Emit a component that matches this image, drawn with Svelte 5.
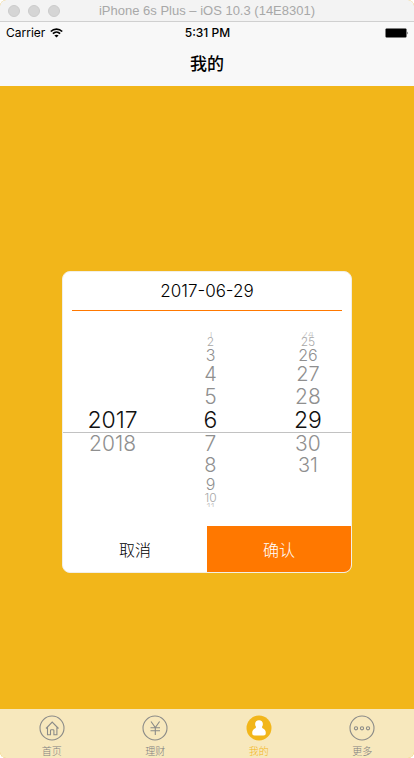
<script>
  const years = [
    { text: '2017', level: 'on' },
    { text: '2018', level: 'd1' }
  ];
  const months = [
    { text: '1', level: 'u5' },
    { text: '2', level: 'u4' },
    { text: '3', level: 'u3' },
    { text: '4', level: 'u2' },
    { text: '5', level: 'u1' },
    { text: '6', level: 'on' },
    { text: '7', level: 'd1' },
    { text: '8', level: 'd2' },
    { text: '9', level: 'd3' },
    { text: '10', level: 'd4' },
    { text: '11', level: 'd5' }
  ];
  const days = [
    { text: '24', level: 'u5' },
    { text: '25', level: 'u4' },
    { text: '26', level: 'u3' },
    { text: '27', level: 'u2' },
    { text: '28', level: 'u1' },
    { text: '29', level: 'on' },
    { text: '30', level: 'd1' },
    { text: '31', level: 'd2' }
  ];
  const wheels = [
    { name: '年', kind: 'year', rows: years },
    { name: '月', kind: 'month', rows: months },
    { name: '日', kind: 'day', rows: days }
  ];
  const tabs = [
    { label: '首页', icon: 'home' },
    { label: '理财', icon: 'money' },
    { label: '我的', icon: 'user' },
    { label: '更多', icon: 'more' }
  ];
</script>

<div class="window">
  <div class="titlebar">
    <div class="lights"><span></span><span></span><span></span></div>
    <div class="device">iPhone 6s Plus – iOS 10.3 (14E8301)</div>
  </div>

  <header>
    <div class="status">
      <div class="carrier">
        Carrier
        <svg width="13" height="10" viewBox="0 0 13 10" fill="none" stroke="#000" stroke-width="1.7">
          <path d="M.8 3.5C4 .2 9 .2 12.2 3.5M2.9 5.7c2-2 5.2-2 7.2 0" />
          <path d="M6.5 9.6 4.4 7.5c1.200-1 3-1 4.200 0z" fill="#000" stroke="none" />
        </svg>
      </div>
      <div class="time">5:31 PM</div>
      <svg class="battery" width="24" height="10" viewBox="0 0 24 10">
        <rect x=".5" y=".5" width="21" height="9" rx="1" />
        <path d="M22.500 3.500q1.200 1.500 0 3z" />
      </svg>
    </div>
    <h1>我的</h1>
  </header>

  <main>
    <div class="card" role="dialog" aria-label="2017-06-29">
      <div class="date">2017-06-29</div>
      <div class="wheels">
        {#each wheels as wheel}
          <div class="wheel {wheel.kind}" role="group" aria-label={wheel.name}>
            {#each wheel.rows as row}
              <button type="button" class="row {row.level}">{row.text}</button>
            {/each}
          </div>
        {/each}
      </div>
      <div class="actions">
        <button type="button" class="cancel">取消</button>
        <button type="button" class="confirm">确认</button>
      </div>
    </div>
  </main>

  <nav>
    {#each tabs as tab}
      <a href="#{tab.icon}" class:active={tab.icon === 'user'}>
        <svg width="26" height="26" viewBox="0 0 26 26" fill="none" stroke="#8b8b88" stroke-width="1.1">
          {#if tab.icon === 'user'}
            <circle cx="13" cy="13" r="12.500" fill="#f2b61a" stroke="none" />
            <path d="M13 5.200c-2.400 0-3.900 1.700-3.900 3.800 0 1.200.4 2.200 1 3-.2.900-.8 1.300-1.600 1.800-1.500.9-2.300 2.200-2.300 4.200 0 1.700.8 2.500 2.300 2.500h9c1.500 0 2.300-.8 2.300-2.500 0-2-.8-3.300-2.300-4.200-.8-.5-1.400-.9-1.600-1.800.6-.8 1-1.800 1-3 0-2.100-1.500-3.800-3.900-3.800z" fill="#fff" stroke="none" />
          {:else}
            <circle cx="13" cy="13" r="12" />
          {/if}
          {#if tab.icon === 'home'}
            <path d="M7 13.500 13.200 7l6.300 6.500M8.500 12.500v7.200h3v-4.200q0-.8.8-.8h1.800q.8 0 .8.800v4.200h3v-7.200" />
          {:else if tab.icon === 'money'}
            <path d="M9 6.500l4.300 6 4.300-6M13.300 12.500V20M8.500 12.700h9.500M8.500 15.700h9.500" />
          {:else if tab.icon === 'more'}
            <circle cx="7" cy="13.300" r="1.600" />
            <circle cx="13" cy="13.300" r="1.600" />
            <circle cx="19" cy="13.300" r="1.600" />
          {/if}
        </svg>
        <span>{tab.label}</span>
      </a>
    {/each}
  </nav>
</div>

<style>
  :global(body) {
    margin: 0;
    background: #fff;
  }
  .window {
    position: relative;
    display: flex;
    flex-direction: column;
    min-height: 100vh;
    overflow: hidden;
    border-radius: 6px;
    background: #f2b61a;
    font-family: Inter, 'Noto Sans CJK SC', sans-serif;
    color: #000;
  }
  button {
    margin: 0;
    padding: 0;
    border: 0;
    background: none;
    font-family: inherit;
    cursor: pointer;
  }
  .titlebar {
    display: grid;
    grid-template-columns: 1fr auto 1fr;
    align-items: center;
    height: 21px;
    border-bottom: 1px solid #d0d0d0;
    background: #f3f3f3;
  }
  .lights {
    display: flex;
    gap: 8px;
    padding-left: 8px;
  }
  .lights span {
    box-sizing: border-box;
    width: 12px;
    height: 12px;
    border: 1px solid #cbcbcb;
    border-radius: 50%;
    background: #d5d5d5;
  }
  .device {
    font-family: 'Liberation Sans', sans-serif;
    font-size: 13px;
    color: #a8a8a8;
  }
  header {
    background: #f8f8f8;
  }
  .status {
    display: grid;
    grid-template-columns: 1fr auto 1fr;
    align-items: center;
    height: 21px;
    padding: 0 5px 0 6px;
    font-size: 12px;
  }
  .carrier {
    display: flex;
    align-items: center;
    gap: 5px;
  }
  .time {
    font-weight: 500;
  }
  .battery {
    justify-self: end;
  }
  h1 {
    margin: 0;
    height: 43px;
    line-height: 43px;
    font-size: 17px;
    font-weight: 500;
    text-align: center;
  }
  main {
    flex: 1;
    display: grid;
    place-items: center;
  }
  .card {
    box-sizing: border-box;
    width: 70%;
    border: 1px solid #f2efe6;
    border-radius: 8px;
    overflow: hidden;
    background: #fff;
  }
  .date {
    margin: 0 9px;
    height: 38px;
    line-height: 38px;
    border-bottom: 1px solid #ff7800;
    font-size: 17px;
    font-weight: 300;
    text-align: center;
  }
  .wheels {
    display: grid;
    grid-template-columns: 99fr 97fr 92fr;
    height: 175px;
    margin: 21px 0 19px;
    overflow: hidden;
  }
  .wheel {
    display: flex;
    flex-direction: column;
  }
  .year {
    padding-top: 76px;
  }
  .row {
    flex: none;
    font-weight: 300;
    color: #8f8f8f;
    text-align: center;
  }
  .day .row {
    padding-left: 6px;
  }
  .on {
    height: 25px;
    line-height: 24px;
    border-bottom: 1px solid #c2c2c2;
    font-size: 23px;
    color: #111;
  }
  .u1 {
    height: 23px;
    font-size: 21px;
    line-height: 23px;
  }
  .u2 {
    height: 22px;
    font-size: 20px;
    line-height: 22px;
  }
  .u3 {
    height: 16px;
    font-size: 16px;
    line-height: 16px;
  }
  .u4 {
    height: 10px;
    font-size: 12px;
    line-height: 10px;
    color: #a8a8a8;
  }
  .u5 {
    height: 5px;
    font-size: 10px;
    line-height: 5px;
    color: #c4c4c4;
  }
  .d1 {
    height: 22px;
    font-size: 21px;
    line-height: 22px;
  }
  .d2 {
    height: 21px;
    font-size: 20px;
    line-height: 21px;
  }
  .d3 {
    height: 16px;
    font-size: 16px;
    line-height: 16px;
  }
  .d4 {
    height: 11px;
    font-size: 12px;
    line-height: 11px;
    color: #a8a8a8;
  }
  .d5 {
    height: 5px;
    font-size: 10px;
    line-height: 8px;
    color: #c4c4c4;
  }
  .actions {
    display: grid;
    grid-template-columns: 1fr 1fr;
    height: 46px;
  }
  .actions button {
    font-size: 16px;
    font-weight: 300;
    color: #000;
  }
  .actions .confirm {
    background: #ff7800;
    color: #fff;
  }
  nav {
    position: absolute;
    left: 0;
    right: 0;
    bottom: 0;
    display: grid;
    grid-template-columns: repeat(4, 1fr);
    height: 49px;
    background: #f7e8bd;
  }
  nav a {
    display: flex;
    flex-direction: column;
    align-items: center;
    gap: 4px;
    padding-top: 6px;
    font-size: 10px;
    font-weight: 300;
    line-height: 12px;
    color: #808080;
    text-decoration: none;
  }
  nav .active {
    color: #f2b61a;
  }
</style>
